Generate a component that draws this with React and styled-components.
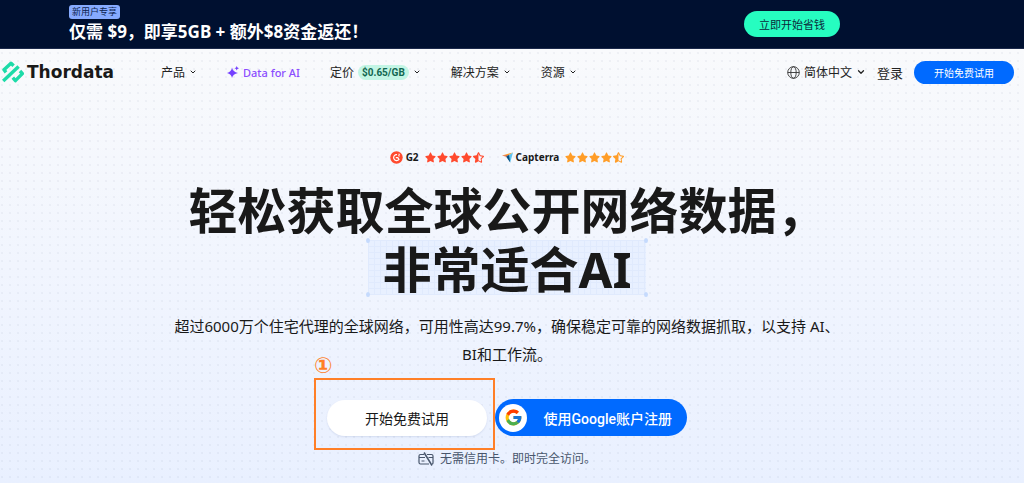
import React from 'react';
import styled, { createGlobalStyle } from 'styled-components';
import { FaStar, FaStarHalfAlt } from 'react-icons/fa';
import { LuChevronDown } from 'react-icons/lu';
import { FcGoogle } from 'react-icons/fc';

const GlobalStyle = createGlobalStyle`
  * {
    box-sizing: border-box;
  }
  body {
    margin: 0;
    background-color: #f0f5fe;
    font-family: 'Noto Sans', 'Noto Sans CJK SC', sans-serif;
    color: #191919;
  }
  button {
    font-family: inherit;
    cursor: pointer;
  }
  a {
    color: inherit;
    text-decoration: none;
  }
`;

const Page = styled.div`
  min-height: 100vh;
  display: flex;
  flex-direction: column;
`;

const PromoBar = styled.div`
  display: flex;
  justify-content: space-between;
  align-items: center;
  padding: 5px 184px 5px 69px;
  background-color: #001030;
  border-bottom: 1px solid #1c2a4c;
`;

const PromoText = styled.div`
  display: flex;
  flex-direction: column;
  align-items: flex-start;
`;

const PromoTag = styled.span`
  padding: 0 3px;
  border-radius: 3px;
  background-color: #86aaff;
  color: #0b1e4e;
  font-size: 9px;
  line-height: 14px;
`;

const PromoTitle = styled.strong`
  color: white;
  font-size: 17px;
  line-height: 26px;
  margin-bottom: -2px;
  white-space: nowrap;
`;

const PillButton = styled.button`
  display: flex;
  justify-content: center;
  align-items: center;
  border: none;
  border-radius: 30px;
  white-space: nowrap;
`;

const PromoButton = styled(PillButton)`
  height: 26px;
  padding: 0 15px;
  background-color: #26fdc0;
  color: #0b2b3c;
  font-size: 11px;
`;

const Main = styled.main`
  flex: 1;
  background-image: radial-gradient(circle at 2px 4px, rgba(80, 95, 130, 0.06) 1px, transparent 1px),
    linear-gradient(#f9fafc, #f1f5fe 50%, #e9f0ff);
  background-size: 8px 8px, 100% 100%;
`;

const NavBar = styled.nav`
  display: flex;
  align-items: center;
  height: 46px;
  padding: 0 10px 0 2px;
`;

const Logo = styled.a`
  display: flex;
  align-items: center;
  gap: 3px;
  width: 159px;
  font-family: 'DejaVu Sans', sans-serif;
  font-size: 17px;
  font-weight: 700;
`;

const NavLinks = styled.div`
  flex: 1;
  display: flex;
  align-items: center;
  gap: 30px;
`;

const NavItem = styled.a`
  display: flex;
  align-items: center;
  gap: 4px;
  font-size: 12px;
  white-space: nowrap;
  color: #222;
`;

const AiLink = styled(NavItem)`
  color: #8b4dff;
  font-size: 11px;
  font-weight: 500;
`;

const LoginLink = styled(NavItem)`
  font-size: 13px;
`;

const PriceTag = styled.span`
  padding: 0 4px;
  border-radius: 8px;
  background-color: #c3f5e5;
  color: #126650;
  font-family: 'Roboto', sans-serif;
  font-size: 10px;
  font-weight: 700;
  line-height: 15px;
`;

const NavActions = styled.div`
  display: flex;
  align-items: center;
  gap: 11px;
`;

const TrialButton = styled(PillButton)`
  width: 100px;
  height: 23px;
  background-color: #006aff;
  color: white;
  font-size: 10px;
`;

const Hero = styled.section`
  display: flex;
  flex-direction: column;
  align-items: center;
  padding: 54px 10px 16px 0;
`;

const Ratings = styled.div`
  display: flex;
  align-items: center;
  gap: 18px;
`;

const Rating = styled.div`
  display: flex;
  align-items: center;
  gap: 3px;
  font-size: 10px;
  font-weight: 700;
  line-height: 16px;
`;

const Stars = styled.span`
  display: flex;
  gap: 1px;
  margin-left: 3px;
  color: ${({ $color }) => $color};
`;

const Title = styled.h1`
  display: flex;
  flex-direction: column;
  align-items: center;
  margin: 16px 0 0;
  font-size: 49px;
  font-weight: 700;
  line-height: 59px;
  white-space: nowrap;
`;

const Highlight = styled.span`
  position: relative;
  height: 55px;
  padding: 0 15px;
  line-height: 59px;
  background-color: #e8f0ff;
  background-image: linear-gradient(#e0eafd 1px, transparent 1px),
    linear-gradient(90deg, #e0eafd 1px, transparent 1px);
  background-size: 6px 6px;
`;

const Corner = styled.i`
  position: absolute;
  ${({ $v }) => $v}: -2px;
  ${({ $h }) => $h}: -2px;
  width: 4px;
  height: 5px;
  border-radius: 50%;
  background-color: #c5dafd;
`;

const Subtitle = styled.p`
  margin: 17px 0 0;
  font-size: 15px;
  line-height: 28px;
  text-align: center;
`;

const HeroActions = styled.div`
  display: flex;
  align-items: center;
  gap: 8px;
  margin-top: 31px;
`;

const TrialWrap = styled.div`
  position: relative;
`;

const StartButton = styled(PillButton)`
  width: 160px;
  height: 36px;
  background-color: white;
  color: #191919;
  font-size: 14px;
  box-shadow: 0 1px 2px rgba(0, 40, 120, 0.1);
`;

const Mark = styled.div`
  position: absolute;
  top: -22px;
  left: -13px;
  right: -8px;
  bottom: -14px;
  border: 2px solid #ff7f27;
  pointer-events: none;
`;

const MarkNumber = styled.span`
  position: absolute;
  top: -26px;
  left: -2px;
  color: #ff7f27;
  font-family: 'DejaVu Sans', sans-serif;
  font-size: 22px;
  font-weight: 700;
  line-height: 24px;
`;

const GoogleButton = styled(PillButton)`
  width: 192px;
  height: 37px;
  padding: 0 15px 0 4px;
  justify-content: space-between;
  background-color: #006aff;
  color: white;
  font-family: 'Roboto', 'Noto Sans CJK SC', sans-serif;
  font-size: 14px;
  font-weight: 500;
`;

const GoogleIcon = styled.span`
  display: flex;
  justify-content: center;
  align-items: center;
  width: 28px;
  height: 28px;
  border-radius: 50%;
  background-color: white;
`;

const Note = styled.p`
  display: flex;
  align-items: center;
  gap: 6px;
  margin: 13px 0 0;
  color: #48566c;
  font-size: 12px;
  line-height: 20px;
`;

const LogoIcon = () => (
  <svg width="22" height="22" viewBox="0 0 22 22" fill="none" stroke="#1ddba8" strokeWidth="3.4">
    <path d="M4 11.4 L2 8.8 L9 2.2 L11.6 4.8" strokeLinejoin="round" />
    <path d="M1.2 20 L16.6 5.4" />
    <path d="M10.8 16.6 L13.4 19.6 L20.4 12.6 L18 10" strokeLinejoin="round" />
  </svg>
);

const SparkIcon = () => (
  <svg width="12" height="12" viewBox="0 0 12 12" fill="#7440ff">
    <path d="M5 1.5 Q5.8 5.8 11 7 Q5.8 8 5 12 Q4.4 8 0 7 Q4.4 5.8 5 1.5Z" />
    <path d="M9.7 0 Q10 1.9 12 2.2 Q10 2.5 9.7 4.4 Q9.4 2.5 7.6 2.2 Q9.4 1.9 9.7 0Z" />
  </svg>
);

const GlobeIcon = () => (
  <svg width="13" height="13" viewBox="0 0 13 13" fill="none" stroke="#333" strokeWidth="0.9">
    <circle cx="6.5" cy="6.5" r="5.8" />
    <ellipse cx="6.5" cy="6.5" rx="2.7" ry="5.8" />
    <path d="M0.7 6.5 H12.3" />
  </svg>
);

const G2Icon = () => (
  <svg width="13" height="13" viewBox="0 0 13 13" fill="none">
    <circle cx="6.5" cy="6.5" r="6.2" fill="#ff4a2e" />
    <path d="M7 3.6 A3 3 0 1 0 9 8.4 L7.8 6.6 H5.8" stroke="white" strokeWidth="1.2" />
    <path d="M8.2 3.2 H9.8 L8.3 5 H10" stroke="white" strokeWidth="0.7" />
  </svg>
);

const CapterraIcon = () => (
  <svg width="11" height="11" viewBox="0 0 11 11">
    <path d="M0 3.6 L7 3 L11 0.4Z" fill="#ff9d28" />
    <path d="M0 3.6 L7 2.8 L6 5.2Z" fill="#e5703c" />
    <path d="M11 0.4 L5 4 L8.2 10.6Z" fill="#5fc3ee" />
    <path d="M4.2 4.7 L7 3 L8.2 10.6Z" fill="#044d80" />
  </svg>
);

const NoCardIcon = () => (
  <svg width="16" height="14" viewBox="0 0 16 14" fill="none" stroke="#48566c" strokeWidth="1.2">
    <path d="M6 2.5 H2.5 Q1 2.5 1 4 V10.5 Q1 12 2.5 12 H11" />
    <path d="M9 2.5 H13.5 Q15 2.5 15 4 V11 Q15 12 14 12" />
    <path d="M1 5.5 H7 M10.5 5.5 H15 M3.5 9 H6.5" />
    <path d="M6 0.5 L14 13.5" strokeWidth="1.5" />
  </svg>
);

const StarRow = ({ color }) => (
  <Stars $color={color}>
    <FaStar size={11} />
    <FaStar size={11} />
    <FaStar size={11} />
    <FaStar size={11} />
    <FaStarHalfAlt size={11} />
  </Stars>
);

const App = () => {
  return (
    <Page>
      <GlobalStyle />
      <PromoBar>
        <PromoText>
          <PromoTag>新用户专享</PromoTag>
          <PromoTitle>仅需 $9，即享5GB + 额外$8资金返还！</PromoTitle>
        </PromoText>
        <PromoButton>立即开始省钱</PromoButton>
      </PromoBar>

      <Main>
        <NavBar>
          <Logo href="#">
            <LogoIcon /> Thordata
          </Logo>
          <NavLinks>
            <NavItem href="#">产品 <LuChevronDown size={8} strokeWidth={3} /></NavItem>
            <AiLink href="#"><SparkIcon /> Data for AI</AiLink>
            <NavItem href="#">
              定价 <PriceTag>$0.65/GB</PriceTag> <LuChevronDown size={8} strokeWidth={3} />
            </NavItem>
            <NavItem href="#">解决方案 <LuChevronDown size={8} strokeWidth={3} /></NavItem>
            <NavItem href="#">资源 <LuChevronDown size={8} strokeWidth={3} /></NavItem>
          </NavLinks>
          <NavActions>
            <NavItem href="#"><GlobeIcon /> 简体中文 <LuChevronDown size={10} strokeWidth={3} /></NavItem>
            <LoginLink href="#">登录</LoginLink>
            <TrialButton>开始免费试用</TrialButton>
          </NavActions>
        </NavBar>

        <Hero>
          <Ratings>
            <Rating><G2Icon /> G2 <StarRow color="#ff4a2e" /></Rating>
            <Rating><CapterraIcon /> Capterra <StarRow color="#ff9d28" /></Rating>
          </Ratings>
          <Title>
            <span>轻松获取全球公开网络数据，</span>
            <Highlight>
              非常适合AI
              <Corner $v="top" $h="left" />
              <Corner $v="top" $h="right" />
              <Corner $v="bottom" $h="left" />
              <Corner $v="bottom" $h="right" />
            </Highlight>
          </Title>
          <Subtitle>
            超过6000万个住宅代理的全球网络，可用性高达99.7%，确保稳定可靠的网络数据抓取，以支持 AI、
            <br />
            BI和工作流。
          </Subtitle>
          <HeroActions>
            <TrialWrap>
              <StartButton>开始免费试用</StartButton>
              <Mark>
                <MarkNumber>①</MarkNumber>
              </Mark>
            </TrialWrap>
            <GoogleButton>
              <GoogleIcon><FcGoogle size={19} /></GoogleIcon>
              使用Google账户注册
            </GoogleButton>
          </HeroActions>
          <Note><NoCardIcon /> 无需信用卡。即时完全访问。</Note>
        </Hero>
      </Main>
    </Page>
  );
};

export default App;
